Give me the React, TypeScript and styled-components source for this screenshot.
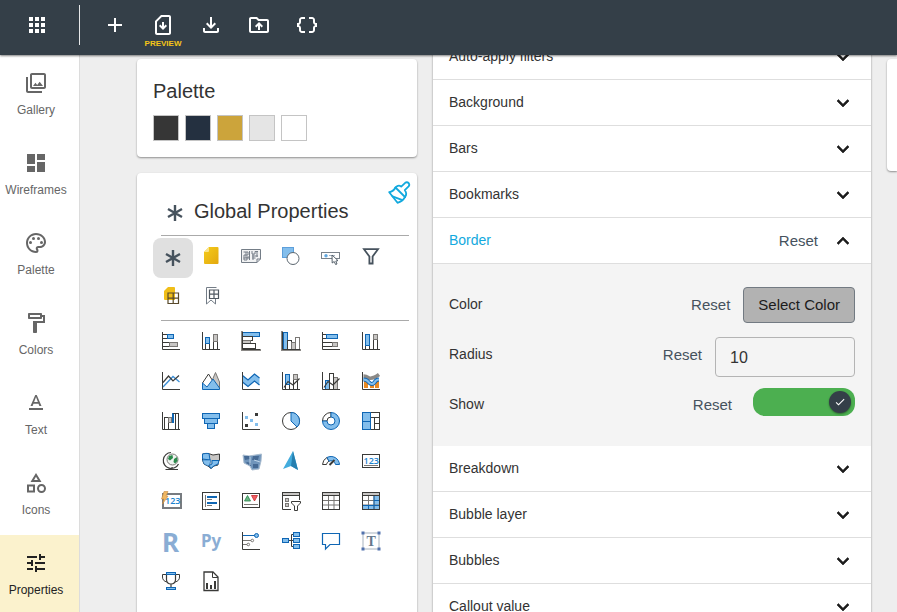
import React, { useState } from "react";
import styled, { createGlobalStyle, css } from "styled-components";
import {
  MdAdd,
  MdApps,
  MdCheck,
  MdDashboard,
  MdDataObject,
  MdExpandLess,
  MdExpandMore,
  MdOutlineCategory,
  MdOutlineDriveFolderUpload,
  MdOutlineFileDownload,
  MdOutlineFormatPaint,
  MdOutlinePalette,
  MdOutlinePhotoLibrary,
  MdOutlineSimCardDownload,
  MdTextFormat,
  MdTune,
} from "react-icons/md";

const GlobalStyle = createGlobalStyle`
  * { box-sizing: border-box; }
  body {
    margin: 0;
    background: #eeeeee;
    color: #333333;
    font-family: "Liberation Sans", Arial, sans-serif;
    font-size: 14px;
  }
  button, input { font: inherit; color: inherit; }
  button { padding: 0; border: 0; background: none; cursor: pointer; }
  h2, hr { margin: 0; }
`;

const DARK = "#3a3a38";
const BLUE = "#0f66b4";
const SKY = "#83beec";
const GRAY = "#c8c6c4";
const MID = "#797774";

/* ---------- page frame ---------- */

const Page = styled.div`
  display: flex;
  flex-direction: column;
  height: 100vh;
  overflow: hidden;
`;

const TopBar = styled.header`
  position: relative;
  z-index: 2;
  flex: none;
  display: flex;
  height: 55px;
  background: #343f48;
  color: #ffffff;
  box-shadow: 0 1px 2px rgba(0, 0, 0, 0.5);
`;

const AppsArea = styled.div`
  display: flex;
  justify-content: center;
  width: 80px;
  height: 40px;
  margin-top: 5px;
  padding-right: 5px;
  border-right: 1px solid #e6e8e9;
`;

const Tools = styled.nav`
  display: flex;
  margin-left: 11px;
`;

const ToolButton = styled.button`
  display: flex;
  flex-direction: column;
  align-items: center;
  width: 48px;
  padding-top: 13px;
  font-size: 24px;
`;

const AppsButton = styled.button`
  display: flex;
  align-items: center;
  font-size: 24px;
`;

const ToolCaption = styled.span`
  margin-top: 2px;
  color: #f5c518;
  font-size: 8px;
  font-weight: bold;
  line-height: 10px;
`;

const Body = styled.div`
  flex: 1;
  display: flex;
  min-height: 0;
`;

const SideBar = styled.nav`
  flex: none;
  width: 80px;
  background: #ffffff;
  border-right: 1px solid #dcdcdc;
`;

const SideItem = styled.button<{ $active?: boolean }>`
  display: flex;
  flex-direction: column;
  align-items: center;
  gap: 7px;
  width: 100%;
  height: 80px;
  padding: 16px 7px 0 0;
  background: ${(p) => (p.$active ? "#fbf2cd" : "transparent")};
  color: ${(p) => (p.$active ? "#222222" : "#666666")};
  font-size: 24px;
`;

const SideLabel = styled.span`
  font-size: 12px;
  line-height: 16px;
`;

const Content = styled.main`
  flex: 1;
  min-width: 0;
  display: grid;
  grid-template-columns: 280px minmax(300px, 438px) minmax(10px, 1fr);
  gap: 16px;
  padding-left: 57px;
  overflow: hidden;
`;

const Column = styled.div`
  display: flex;
  flex-direction: column;
  gap: 16px;
  padding-top: 4px;
`;

const Card = styled.section<{ $grow?: boolean }>`
  position: relative;
  padding: 16px;
  background: #ffffff;
  border-radius: 4px;
  box-shadow: 0 1px 2px rgba(0, 0, 0, 0.4);
  ${(p) => p.$grow && css`flex: 1; padding: 24px 8px 0 16px;`}
`;

const PreviewCard = styled.section`
  height: 112px;
  background: #ffffff;
  border-radius: 4px 0 0 4px;
  box-shadow: 0 1px 2px rgba(0, 0, 0, 0.4);
`;

const Title = styled.h2`
  font-size: 20px;
  font-weight: normal;
  line-height: 28px;
`;

const Swatches = styled.div`
  display: flex;
  gap: 6px;
  padding: 10px 0 0;
`;

const PaletteBody = styled.div`
  padding-top: 2px;
`;

const Swatch = styled.button<{ $color: string }>`
  width: 26px;
  height: 26px;
  border: 1px solid #c4c4c4;
  background: ${(p) => p.$color};
`;

const GlobalHead = styled.div`
  display: flex;
  align-items: flex-end;
  gap: 7px;
  height: 38px;
  padding: 0 0 10px 10px;
`;

const BrushButton = styled.button`
  position: absolute;
  top: 8px;
  right: 5px;
  width: 24px;
  height: 24px;
`;

const Rule = styled.hr`
  height: 1px;
  margin: 0 0 2px 8px;
  border: 0;
  background: #aaaaaa;
`;

const IconGrid = styled.div`
  display: grid;
  grid-template-columns: repeat(6, 40px);
  grid-auto-rows: 40px;
  padding-bottom: 2px;
`;

const IconCell = styled.button<{ $active?: boolean }>`
  display: flex;
  align-items: flex-start;
  padding: 8px;
  border-radius: 8px;
  background: ${(p) => (p.$active ? "#e0e0e0" : "transparent")};
`;

const Glyph = styled.svg`
  display: block;
  flex: none;
  overflow: visible;
`;

/* ---------- accordion ---------- */

const Accordion = styled.section`
  align-self: start;
  margin-top: -21px;
  background: #ffffff;
  box-shadow: 0 0 2px rgba(0, 0, 0, 0.4);
`;

const AccordionRow = styled.div`
  display: flex;
  align-items: center;
  height: 46px;
  padding: 0 16px;
  border-bottom: 1px solid #dedede;
`;

const RowTitle = styled.button<{ $open?: boolean }>`
  flex: 1;
  height: 100%;
  padding-bottom: 2px;
  text-align: left;
  color: ${(p) => (p.$open ? "#12a9de" : "#333333")};
`;

const Chevron = styled.button`
  display: flex;
  color: #1c1c1c;
  font-size: 24px;
  path:last-child { stroke-width: 0.6px; }
`;

const ResetButton = styled.button`
  margin-right: 13px;
  color: #46525d;
  font-size: 15px;
  line-height: 36px;
`;

const Form = styled.div`
  padding: 16px;
  background: #f4f4f4;
`;

const FormRow = styled.div`
  display: flex;
  align-items: flex-start;
  height: 50px;
  padding-top: 7px;
`;

const FieldLabel = styled.label`
  flex: 1;
  line-height: 34px;
`;

const ColorButton = styled.button`
  height: 36px;
  padding: 0 14px 2px;
  border: 1px solid #727a82;
  border-radius: 4px;
  background: #b2b2b2;
  color: #1c1c1c;
  font-size: 15px;
`;

const NumberInput = styled.input`
  width: 140px;
  height: 40px;
  padding: 2px 14px 0;
  border: 1px solid #b4b4b4;
  border-radius: 4px;
  background: transparent;
  font-size: 16px;
`;

const Toggle = styled.span`
  position: relative;
  width: 102px;
  height: 28px;
  margin: 1px 0 0 8px;
`;

const ToggleInput = styled.input`
  appearance: none;
  display: block;
  width: 100%;
  height: 100%;
  margin: 0;
  border-radius: 12px;
  background: #b5b5b5;
  cursor: pointer;
  &:checked { background: #4caf50; }
`;

const Knob = styled.span<{ $on: boolean }>`
  position: absolute;
  top: 3px;
  ${(p) => (p.$on ? "right: 4px;" : "left: 4px;")}
  display: grid;
  place-items: center;
  width: 22px;
  height: 22px;
  border-radius: 50%;
  background: #343f48;
  color: #ffffff;
  font-size: 12px;
  box-shadow: 0 1px 2px rgba(0, 0, 0, 0.4);
  pointer-events: none;
`;

/* ---------- drawings ---------- */

const Axis = () => <path d="M1.5 1V18.5H19" fill="none" stroke={DARK} />;

const Bar = ({ x, y, w, h, f = "#fff", s = DARK }: { x: number; y: number; w: number; h: number; f?: string; s?: string }) => (
  <rect x={x + 0.5} y={y + 0.5} width={w - 1} height={h - 1} fill={f} stroke={s} />
);

const Asterisk = () => (
  <Glyph width="24" height="24" viewBox="0 0 24 24">
    <path d="M12 4V20M5 8L19 16M5 16L19 8" stroke="#46525d" strokeWidth="2.4" fill="none" />
  </Glyph>
);

const Brush = () => (
  <Glyph width="24" height="24" viewBox="0 0 24 24" fill="none" stroke="#12a9de" strokeWidth="1.8" strokeLinejoin="round" strokeLinecap="round">
    <path d="M7.500 6.500L17 16" />
    <path d="M7.500 6.500Q10.500 3.200 13.200 5.600L17.200 1.800Q19 0.500 20.600 2Q22 3.800 20.600 5.400L16.800 9.200Q19.500 12.500 17 16" />
    <path d="M7.500 6.500Q5.500 10.500 1.200 11.200L9.500 21.800Q14.500 20.500 17 16" />
    <path d="M4.500 15.300L13.800 18.800" />
  </Glyph>
);

const line = "M3 16.5L7 10.5L12 14L18.5 7.5";

const generalIcons: [string, React.ReactNode][] = [
  ["Page", <>
    <defs><linearGradient id="sheet" x2="1" y2="1"><stop stopColor="#f5cc1b" /><stop offset="1" stopColor="#e3a80f" /></linearGradient></defs>
    <path d="M8 1H16.500Q17.500 1 17.500 2V17Q17.500 18 16.500 18H4Q3 18 3 17V6Z" fill="url(#sheet)" />
    <path d="M3 6L8 1V5Q8 6 7 6Z" fill="#fae48a" />
  </>],
  ["Wallpaper", <g fill="none" stroke="#747d87">
    <path d="M0.500 3.500H19.500V13L16 16.500H0.500ZM16 16.500V13H19.500" fill="#f1f2f3" />
    <path d="M2.500 6H7V9H3V14H6V11H9M8.500 5V14M11 5V8H14V5.500H17M11 10H17M11 12H14.500M12 8V14M2.500 12H8M5 6V12M16 6V11" />
  </g>],
  ["Shapes", <>
    <Bar x={1} y={1} w={12} h={11} f={SKY} s="#5d9fdb" />
    <circle cx="12" cy="12.500" r="6" fill="#fff" stroke="#5c6770" />
  </>],
  ["Button", <>
    <rect x="0.500" y="6.500" width="18" height="6" fill="#fff" stroke="#7b838b" />
    <circle cx="5" cy="9.700" r="1.700" fill="#62a8e0" />
    <path d="M8 9.500H14" stroke="#a8b5c2" />
    <path d="M11 9L11.200 17L13.200 15.500L14.600 18.500L16 18L14.800 15L17 14.600Z" fill="#fff" stroke="#46525d" strokeWidth="0.9" />
  </>],
  ["Filter", <path d="M3 3.200H17L11.600 10.500V17.500H8.400V10.500Z" fill="none" stroke="#46525d" strokeWidth="1.800" />],
  ["Page grid", <>
    <path d="M7 1H13Q14 1 14 2V14H4Q3 14 3 13V5Z" fill="#f0be18" />
    <path d="M7 7H17.500V17.500H7ZM12.200 7V17.500M7 12.200H17.500" fill="none" stroke="#58492a" strokeWidth="1.200" />
  </>],
  ["Bookmark grid", <g fill="none" stroke="#747d87">
    <path d="M10 1.500H5.500V18L10 14L14.500 18V13M9 1.500H15.500" />
    <path d="M8.500 4H17.500V12.500H8.500ZM13 4V12.500M8.500 8.200H17.500" stroke="#505962" strokeWidth="1.200" />
  </g>],
];

const usLeft = "M1.500 3Q5 2 8 2.500L9 9L1.500 8Z";
const TableFrame = () => (
  <>
    <path d="M7.500 5V18M13 5V18M2 9.500H18M2 14H18" stroke={MID} fill="none" />
    <Bar x={1} y={1} w={18} h={4} f={GRAY} />
    <rect x="1.500" y="1.500" width="17" height="17" fill="none" stroke={DARK} />
  </>
);

const visualIcons: [string, React.ReactNode][] = [
  ["Stacked bar chart", <><Bar x={1} y={3} w={6} h={5} /><Bar x={6} y={3} w={7} h={5} f={SKY} s={BLUE} /><Bar x={1} y={11} w={8} h={5} /><Bar x={8} y={11} w={9} h={5} f={GRAY} s={MID} /><Axis /></>],
  ["Stacked column chart", <><Bar x={4} y={12} w={5} h={7} /><Bar x={4} y={6} w={5} h={7} f={SKY} s={BLUE} /><Bar x={12} y={10} w={5} h={9} /><Bar x={12} y={3} w={5} h={8} f={GRAY} s={MID} /><Axis /></>],
  ["Clustered bar chart", <><path d="M1 0V19H20" stroke="#8b8986" strokeWidth="2" fill="none" /><Bar x={1} y={1} w={18} h={5} f={SKY} s={BLUE} /><Bar x={1} y={5} w={11} h={5} /><Bar x={1} y={9} w={9} h={4} f={GRAY} s={MID} /><Bar x={1} y={12} w={14} h={6} /><Axis /></>],
  ["Clustered column chart", <><path d="M1 0V19H20" stroke="#8b8986" strokeWidth="2" fill="none" /><Bar x={2} y={1} w={5} h={18} f={SKY} s={BLUE} /><Bar x={6} y={9} w={5} h={10} /><Bar x={10} y={11} w={5} h={8} f={GRAY} s={MID} /><Bar x={14} y={6} w={5} h={13} s={MID} /><Axis /></>],
  ["100% stacked bar chart", <><Bar x={1} y={3} w={5} h={5} /><Bar x={5} y={3} w={12} h={5} f={SKY} s={BLUE} /><Bar x={1} y={11} w={11} h={5} /><Bar x={11} y={11} w={6} h={5} f={GRAY} s={MID} /><Axis /></>],
  ["100% stacked column chart", <><Bar x={4} y={13} w={5} h={6} /><Bar x={4} y={3} w={5} h={12} f={SKY} s={BLUE} /><Bar x={12} y={8} w={5} h={11} /><Bar x={12} y={3} w={5} h={6} f={GRAY} s={MID} /><Axis /></>],

  ["Line chart", <><path d="M2 16L12 5.500L18.500 11" stroke="#3c8fd6" strokeWidth="1.300" fill="none" /><path d="M2 11.500L7.500 5L12 10L18 4.500" stroke={DARK} strokeWidth="1.200" fill="none" /><Axis /></>],
  ["Area chart", <><path d="M10 12L14.500 1.500L18.500 11V18H10Z" fill={GRAY} stroke={MID} /><path d="M1.500 12L7.500 3L13 12" fill="#fff" stroke={DARK} /><path d="M1.500 18.500V12L6 16L12 8L18.500 17V18.500Z" fill={SKY} stroke={BLUE} /></>],
  ["Stacked area chart", <><path d="M1.500 4.500L7 9L13.500 3L18.500 7V14L13.500 10L7 15.500L1.500 11Z" fill={SKY} stroke="none" /><path d="M1.500 4.500L7 9L13.500 3L18.500 7M1.500 11L7 15.500L13.500 10L18.500 14" stroke={BLUE} fill="none" strokeWidth="1.200" /><Axis /></>],
  ["Line and stacked column chart", <><Bar x={4} y={13} w={5} h={6} /><Bar x={4} y={3} w={5} h={11} f={SKY} s={BLUE} /><Bar x={12} y={8} w={5} h={11} /><Bar x={12} y={3} w={5} h={6} f={GRAY} s={MID} /><path d={line} stroke={DARK} fill="none" strokeWidth="1.200" /><Axis /></>],
  ["Line and clustered column chart", <><Bar x={4} y={9} w={5} h={10} f={SKY} s={BLUE} /><Bar x={12} y={6} w={5} h={13} f={GRAY} s={MID} /><Bar x={8} y={2} w={5} h={17} /><path d={line} stroke={DARK} fill="none" strokeWidth="1.200" /><Axis /></>],
  ["Ribbon chart", <><path d="M3 10H7V17H3ZM9 12H13V17H9ZM14 10H18V17H14Z" fill="#e98a24" /><path d="M2.500 5Q5 5 8 7Q12 8 18 3.500" fill="none" stroke="#8b8986" strokeWidth="3.600" /><path d="M2.500 8.500Q6 8.500 8 11.500Q11 14.500 13.500 11.500Q15 8.500 18 8.500" fill="none" stroke={BLUE} strokeWidth="4" /><path d="M2.500 8.500Q6 8.500 8 11.500Q11 14.500 13.500 11.500Q15 8.500 18 8.500" fill="none" stroke={SKY} strokeWidth="2.200" /><Axis /></>],

  ["Waterfall chart", <><Bar x={3} y={6} w={5} h={13} /><Bar x={7} y={6} w={4} h={6} f={GRAY} s={MID} /><Bar x={11} y={2} w={2} h={10} f={BLUE} s={BLUE} /><Bar x={14} y={2} w={4} h={17} /><path d="M12 2.500H16" stroke={DARK} /><Axis /></>],
  ["Funnel", <><Bar x={1} y={2} w={18} h={6} f={SKY} s={BLUE} /><Bar x={3} y={7} w={14} h={6} f={SKY} s={BLUE} /><Bar x={6} y={12} w={8} h={6} f={SKY} s={BLUE} /></>],
  ["Scatter chart", <><path d="M14 2H17V5H14ZM4 13H7V16H4Z" fill={DARK} /><path d="M4 5H7V8H4ZM9 8H12V11H9ZM14 12H17V15H14Z" fill={SKY} /><Axis /></>],
  ["Pie chart", <><circle cx="10" cy="10" r="8.500" fill="#fff" stroke={DARK} /><path d="M10 1.500A8.500 8.500 0 0 1 16 16L10 10Z" fill={SKY} stroke={BLUE} /></>],
  ["Donut chart", <><path d="M10 1.500A8.500 8.500 0 0 0 1.500 10H6A4 4 0 0 1 10 6Z" fill="#fff" stroke={DARK} /><path d="M10 1.500A8.500 8.500 0 1 1 1.500 10H6A4 4 0 1 0 10 6Z" fill={SKY} stroke={BLUE} /></>],
  ["Treemap", <><Bar x={1} y={1} w={18} h={18} /><path d="M10 6.500H19M13.500 6.500V18.500M13.500 12.500H19" stroke={DARK} fill="none" /><Bar x={1} y={1} w={9} h={18} f={SKY} s={BLUE} /><path d="M1 10.500H10" stroke={BLUE} /></>],

  ["Map", <><circle cx="11.500" cy="8.500" r="5.500" fill="#eef3ef" stroke={MID} /><path d="M8 5L11.500 4L12 7L9 9.500L7 8ZM13 8L16 6L16.500 10L14 12.500L12.500 11Z" fill="#2b8a4b" /><path d="M10 1.500A8 8 0 1 0 17.500 13M11 16V18.500M4.500 18.500H17" fill="none" stroke={DARK} strokeWidth="1.200" /></>],
  ["Filled map", <><path d="M1.500 3Q6 2 9 3L12 4L18.500 3V9L17 11V14L13 15L10 17.500L7 15L3 13L1.500 9Z" fill={GRAY} stroke={DARK} /><path d={usLeft} fill={SKY} stroke={BLUE} /><path d="M1.500 9L3 13L7 15L8.500 14L10 9Z" fill={SKY} stroke={BLUE} strokeWidth="0.6" /><path d="M11 9.500H18L17 13L12.500 15L10 17.500L8 14.500L11 13Z" fill={SKY} stroke={BLUE} /></>],
  ["Azure map", <><path d="M2 4L8 5L20.500 3L20 10L18 18L11 19L9 15L3 12Z" fill="#7095bb" stroke="#a9bccf" /><path d="M3 5H8L9 8L4 9ZM12 5L18 5L17 9L11 9ZM6 11L10 12V15L5 12ZM12 13H17V17L12 17Z" fill="#466a94" /><path d="M9 6V14M13 9L19 11" stroke="#bcd3e8" /></>],
  ["ArcGIS map", <><path d="M12 0L17 19L10 15L2 18Z" fill="#43acdd" /><path d="M12 0L17 19L10 15Z" fill="#257fb0" /></>],
  ["Gauge", <><path d="M1.500 13.500A8.500 8.500 0 0 1 6 6.500L8 10.200A4.500 4.500 0 0 0 5.500 13.500Z" fill="#fff" stroke={DARK} /><path d="M6 6.500A8.500 8.500 0 0 1 18.500 13.500H14.500A4.500 4.500 0 0 0 8 10.200Z" fill={SKY} stroke={BLUE} /><path d="M8.500 14L13.500 9" stroke={DARK} strokeWidth="2" /></>],
  ["Card", <><Bar x={1} y={3} w={18} h={14} /><text x="2.500" y="12.500" fontFamily="Open Sans" fontSize="9" fontWeight="600" fill="#1c83cf">123</text><path d="M3 14.500H17" stroke={MID} /></>],

  ["Card (new)", <><rect x="2" y="3" width="18" height="14" fill="#fff" stroke="#777b80" strokeWidth="2" /><text x="4" y="13" fontFamily="Open Sans" fontSize="9" fontWeight="600" fill="#1c83cf">123</text><path d="M3 0.500H7L5 5H7L1.500 13L3 8H0.500Z" fill="#efb763" stroke="#c98b3d" strokeWidth="0.600" /></>],
  ["Multi-row card", <><Bar x={1} y={1} w={18} h={18} /><path d="M4.500 4V16" stroke={MID} /><path d="M6 6H16M6 12H16" stroke={BLUE} strokeWidth="2" /><path d="M6 8.500H11M6 14.500H11" stroke={MID} /></>],
  ["KPI", <><Bar x={1} y={2} w={18} h={15} /><path d="M6.500 4.500L9.500 10H3.500Z" fill="#6bb583" stroke="#26844a" strokeWidth="0.800" /><path d="M13.500 10L10.500 4.500H16.500Z" fill="#ef5e63" stroke="#c6282d" strokeWidth="0.800" /><path d="M3 13.500H17" stroke={MID} /></>],
  ["Slicer", <><path d="M1.500 1.500H18.500V9M10 18.500H1.500V1.500" fill="none" stroke={DARK} /><Bar x={1} y={1} w={18} h={4} f={GRAY} /><Bar x={4} y={7} w={4} h={4} f={GRAY} s={MID} /><Bar x={4} y={12} w={4} h={4} f={GRAY} s={MID} /><path d="M10.500 10.500H19.500V12L16.500 15V19.500H13.500V15L10.500 12Z" fill="#fff" stroke={DARK} /></>],
  ["Table", <TableFrame />],
  ["Matrix", <><path d="M13 5H19V19H1V14H13Z" fill={SKY} /><TableFrame /><path d="M2 14.500H18M13 5V18M7.500 14V18M13 9.500H18" stroke={BLUE} fill="none" /></>],

  ["R script visual", <text x="1" y="21" fontFamily="Noto Sans" fontWeight="700" fontSize="26" fill="#8aadd4">R</text>],
  ["Python visual", <text x="0" y="16" fontFamily="Noto Sans" fontWeight="700" fontSize="17" fill="#8aadd4">Py</text>],
  ["Key influencers", <><path d="M2 4.500H14" stroke={BLUE} /><circle cx="15.500" cy="4.500" r="2" fill={SKY} stroke={BLUE} /><path d="M2 9.500H10M2 13.500H6" stroke={MID} /><circle cx="11.300" cy="9.500" r="1.300" fill="#fff" stroke={MID} /><circle cx="7.300" cy="13.500" r="1.300" fill="#fff" stroke={MID} /><Axis /></>],
  ["Decomposition tree", <><path d="M8 9.500H12M12 3.500H10.500V15.500H12" fill="none" stroke={DARK} /><Bar x={1} y={7} w={7} h={5} f={SKY} s={BLUE} /><Bar x={12} y={1} w={7} h={5} f={SKY} s={BLUE} /><Bar x={12} y={7} w={7} h={5} f={SKY} s={BLUE} /><Bar x={12} y={13} w={7} h={5} f={SKY} s={BLUE} /></>],
  ["Q&A", <path d="M1.500 2.500H18.500V13.500H9L4.500 18V13.500H1.500Z" fill="#fff" stroke={BLUE} strokeWidth="1.200" />],
  ["Text box", <><rect x="2" y="2" width="16" height="16" fill="#fff" stroke="#a8b4c0" /><path d="M0.500 0.500H3.500V3.500H0.500ZM16.500 0.500H19.500V3.500H16.500ZM0.500 16.500H3.500V19.500H0.500ZM16.500 16.500H19.500V19.500H16.500Z" fill="#5272ad" /><text x="5.500" y="14.500" fontFamily="Liberation Serif" fontWeight="700" fontSize="14" fill="#66788c">T</text></>],

  ["Goals", <><path d="M5 3.500H1.500V6Q1.500 10 6 11M15 3.500H18.500V6Q18.500 10 14 11" fill="none" stroke={DARK} /><path d="M5.500 3V9Q6 13 10 13Q14 13 14.500 9V3M10 13V16" fill="#fff" stroke={DARK} strokeWidth="1.200" /><Bar x={5} y={1} w={10} h={3} f={SKY} s={BLUE} /><Bar x={5} y={16} w={10} h={3} f={SKY} s={BLUE} /></>],
  ["Paginated report", <><path d="M3 1H12L17 6V19.500H3Z" fill="#fff" stroke={DARK} strokeWidth="1.300" /><path d="M11.500 1V6.500H17" fill="none" stroke={DARK} /><path d="M5 12H7V18H5ZM9 14H11V18H9ZM13 10H15V18H13Z" fill={DARK} /></>],
];

/* ---------- data ---------- */

const sideItems: [string, React.ReactNode][] = [
  ["Gallery", <MdOutlinePhotoLibrary />],
  ["Wireframes", <MdDashboard />],
  ["Palette", <MdOutlinePalette />],
  ["Colors", <MdOutlineFormatPaint />],
  ["Text", <MdTextFormat />],
  ["Icons", <MdOutlineCategory />],
  ["Properties", <MdTune />],
];

const tools: [string, React.ReactNode, string?][] = [
  ["Add", <MdAdd />],
  ["Preview download", <MdOutlineSimCardDownload />, "PREVIEW"],
  ["Download", <MdOutlineFileDownload />],
  ["Upload", <MdOutlineDriveFolderUpload />],
  ["JSON", <MdDataObject />],
];

const swatches = ["#363636", "#243040", "#cca43b", "#e5e5e5", "#ffffff"];

const sections = [
  "Auto-apply filters",
  "Background",
  "Bars",
  "Bookmarks",
  "Border",
  "Breakdown",
  "Bubble layer",
  "Bubbles",
  "Callout value",
];

/* ---------- components ---------- */

function BorderForm() {
  const [radius, setRadius] = useState("10");
  const [show, setShow] = useState(true);
  return (
    <Form>
      <FormRow>
        <FieldLabel htmlFor="border-color">Color</FieldLabel>
        <ResetButton>Reset</ResetButton>
        <ColorButton id="border-color">Select Color</ColorButton>
      </FormRow>
      <FormRow>
        <FieldLabel htmlFor="border-radius">Radius</FieldLabel>
        <ResetButton>Reset</ResetButton>
        <NumberInput id="border-radius" value={radius} onChange={(e) => setRadius(e.target.value)} />
      </FormRow>
      <FormRow>
        <FieldLabel htmlFor="border-show">Show</FieldLabel>
        <ResetButton>Reset</ResetButton>
        <Toggle>
          <ToggleInput id="border-show" type="checkbox" checked={show} onChange={(e) => setShow(e.target.checked)} />
          <Knob $on={show}>{show && <MdCheck />}</Knob>
        </Toggle>
      </FormRow>
    </Form>
  );
}

export default function App() {
  const [open, setOpen] = useState("Border");
  const toggle = (name: string) => setOpen(open === name ? "" : name);
  return (
    <Page>
      <GlobalStyle />
      <TopBar>
        <AppsArea>
          <AppsButton aria-label="Apps"><MdApps /></AppsButton>
        </AppsArea>
        <Tools>
          {tools.map(([name, icon, caption]) => (
            <ToolButton key={name} aria-label={name}>
              {icon}
              {caption && <ToolCaption>{caption}</ToolCaption>}
            </ToolButton>
          ))}
        </Tools>
      </TopBar>
      <Body>
        <SideBar>
          {sideItems.map(([name, icon]) => (
            <SideItem key={name} $active={name === "Properties"}>
              {icon}
              <SideLabel>{name}</SideLabel>
            </SideItem>
          ))}
        </SideBar>
        <Content>
          <Column>
            <Card>
              <PaletteBody>
                <Title>Palette</Title>
                <Swatches>
                  {swatches.map((color) => (
                    <Swatch key={color} $color={color} aria-label={color} />
                  ))}
                </Swatches>
              </PaletteBody>
            </Card>
            <Card $grow>
              <BrushButton aria-label="Apply style"><Brush /></BrushButton>
              <GlobalHead>
                <Asterisk />
                <Title>Global Properties</Title>
              </GlobalHead>
              <Rule />
              <IconGrid>
                <IconCell $active aria-label="Global"><Asterisk /></IconCell>
                {generalIcons.map(([name, art]) => (
                  <IconCell key={name} aria-label={name}>
                    <Glyph width="20" height="20" viewBox="0 0 20 20">{art}</Glyph>
                  </IconCell>
                ))}
              </IconGrid>
              <Rule />
              <IconGrid>
                {visualIcons.map(([name, art]) => (
                  <IconCell key={name} aria-label={name}>
                    <Glyph width="20" height="20" viewBox="0 0 20 20">{art}</Glyph>
                  </IconCell>
                ))}
              </IconGrid>
            </Card>
          </Column>
          <Accordion>
            {sections.map((name) => (
              <React.Fragment key={name}>
                <AccordionRow>
                  <RowTitle $open={open === name} aria-expanded={open === name} onClick={() => toggle(name)}>
                    {name}
                  </RowTitle>
                  {open === name && <ResetButton>Reset</ResetButton>}
                  <Chevron aria-label={`Toggle ${name}`} onClick={() => toggle(name)}>
                    {open === name ? <MdExpandLess /> : <MdExpandMore />}
                  </Chevron>
                </AccordionRow>
                {name === "Border" && open === name && <BorderForm />}
              </React.Fragment>
            ))}
          </Accordion>
          <Column>
            <PreviewCard />
          </Column>
        </Content>
      </Body>
    </Page>
  );
}
